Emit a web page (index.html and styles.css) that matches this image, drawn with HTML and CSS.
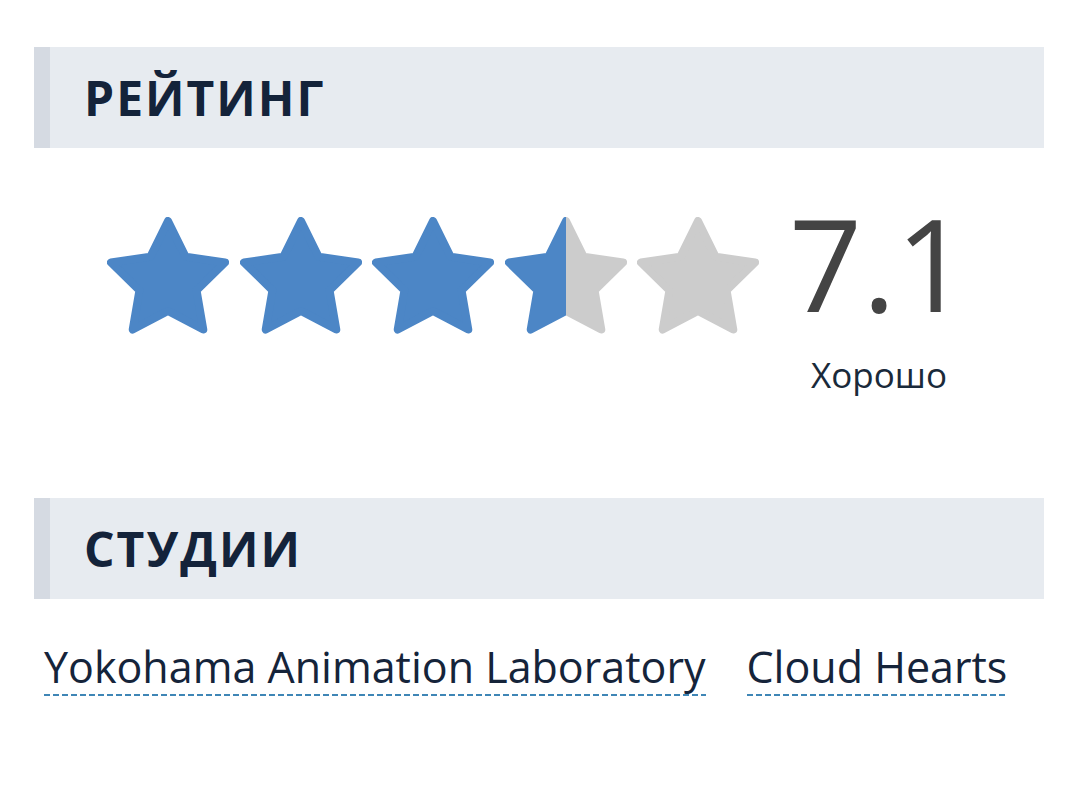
FILE: index.html
```html
<!DOCTYPE html>
<html lang="ru">
<head>
<meta charset="utf-8">
<link rel="stylesheet" href="styles.css">
</head>
<body>
<main class="page">
  <section class="block">
    <h2 class="block-title">Рейтинг</h2>
    <div class="rating">
      <div class="stars">
        <svg class="star" viewBox="0 0 122 117"><polygon class="star-on" points="61,4 78.63,39.73 118.07,45.46 89.53,73.27 96.27,112.54 61,94 25.73,112.54 32.47,73.27 3.93,45.46 43.37,39.73"/></svg>
        <svg class="star" viewBox="0 0 122 117"><polygon class="star-on" points="61,4 78.63,39.73 118.07,45.46 89.53,73.27 96.27,112.54 61,94 25.73,112.54 32.47,73.27 3.93,45.46 43.37,39.73"/></svg>
        <svg class="star" viewBox="0 0 122 117"><polygon class="star-on" points="61,4 78.63,39.73 118.07,45.46 89.53,73.27 96.27,112.54 61,94 25.73,112.54 32.47,73.27 3.93,45.46 43.37,39.73"/></svg>
        <svg class="star" viewBox="0 0 122 117">
          <defs>
            <linearGradient id="half" gradientUnits="userSpaceOnUse" x1="0" y1="0" x2="122" y2="0">
              <stop offset="0.5" stop-color="#4c86c6"/>
              <stop offset="0.5" stop-color="#cccccc"/>
            </linearGradient>
          </defs>
          <polygon class="star-half" points="61,4 78.63,39.73 118.07,45.46 89.53,73.27 96.27,112.54 61,94 25.73,112.54 32.47,73.27 3.93,45.46 43.37,39.73"/>
        </svg>
        <svg class="star" viewBox="0 0 122 117"><polygon class="star-off" points="61,4 78.63,39.73 118.07,45.46 89.53,73.27 96.27,112.54 61,94 25.73,112.54 32.47,73.27 3.93,45.46 43.37,39.73"/></svg>
      </div>
      <div class="score">
        <div class="score-value">7.1</div>
        <div class="score-label">Хорошо</div>
      </div>
    </div>
  </section>
  <section class="block">
    <h2 class="block-title">Студии</h2>
    <div class="studios">
      <a class="studio" href="#">Yokohama Animation Laboratory</a>
      <a class="studio" href="#">Cloud Hearts</a>
    </div>
  </section>
</main>
</body>
</html>
```

FILE: styles.css
```css
* { box-sizing: border-box; }

html, body {
  margin: 0;
  padding: 0;
  background: #ffffff;
}

body {
  font-family: "Open Sans", "Noto Sans", sans-serif;
  color: #15243a;
}

.page {
  padding: 47px 36px 0 34px;
}

.block-title {
  margin: 0;
  height: 101px;
  line-height: 101px;
  padding-left: 34px;
  background: #e7ebf0;
  border-left: 16px solid #d5dae2;
  font-size: 48px;
  font-weight: 700;
  letter-spacing: 2px;
  text-transform: uppercase;
  color: #14233a;
}

.rating {
  display: flex;
  align-items: flex-start;
  padding: 51px 0 0 73px;
  height: 350px;
}

.stars {
  display: flex;
  gap: 10.5px;
  margin-top: 18px;
}

.star {
  width: 122px;
  height: 117px;
  display: block;
}

.star polygon {
  stroke-width: 8;
  stroke-linejoin: round;
}

.star-on { fill: #4c86c6; stroke: #4c86c6; }
.star-off { fill: #cccccc; stroke: #cccccc; }
.star-half { fill: url(#half); stroke: url(#half); }

.score {
  margin-left: 30px;
  display: flex;
  flex-direction: column;
  align-items: center;
}

.score-value {
  font-size: 128px;
  line-height: 128px;
  color: #444444;
}

.score-label {
  margin-top: 29px;
  font-size: 35px;
  line-height: 38px;
  color: #1a2a3a;
}

.studios {
  display: flex;
  gap: 41px;
  padding: 41px 0 0 10px;
}

.studio {
  display: inline-block;
  font-size: 43px;
  line-height: 54px;
  padding-bottom: 2px;
  color: #15243a;
  text-decoration: none;
  background-image: repeating-linear-gradient(90deg, #3f86b6 0 6px, transparent 6px 9px);
  background-size: 100% 2px;
  background-position: left bottom;
  background-repeat: no-repeat;
}
```
